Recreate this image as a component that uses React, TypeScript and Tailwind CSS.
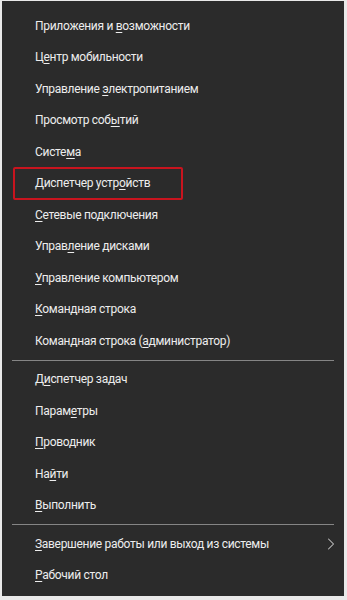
import { ChevronRight } from 'lucide-react';

type Item = { pre: string; key: string; post: string; arrow?: boolean; marked?: boolean };

const groups: Item[][] = [
  [
    { pre: 'Приложения и ', key: 'в', post: 'озможности' },
    { pre: 'Ц', key: 'е', post: 'нтр мобильности' },
    { pre: 'Управление ', key: 'э', post: 'лектропитанием' },
    { pre: 'Просмотр соб', key: 'ы', post: 'тий' },
    { pre: 'Систе', key: 'м', post: 'а' },
    { pre: 'Диспетчер устр', key: 'о', post: 'йств', marked: true },
    { pre: '', key: 'С', post: 'етевые подключения' },
    { pre: 'Управ', key: 'л', post: 'ение дисками' },
    { pre: '', key: 'У', post: 'правление компьютером' },
    { pre: '', key: 'К', post: 'омандная строка' },
    { pre: 'Командная строка (', key: 'а', post: 'дминистратор)' },
  ],
  [
    { pre: 'Д', key: 'и', post: 'спетчер задач' },
    { pre: 'Парам', key: 'е', post: 'тры' },
    { pre: '', key: 'П', post: 'роводник' },
    { pre: 'На', key: 'й', post: 'ти' },
    { pre: '', key: 'В', post: 'ыполнить' },
  ],
  [
    { pre: '', key: 'З', post: 'авершение работы или выход из системы', arrow: true },
    { pre: '', key: 'Р', post: 'абочий стол' },
  ],
];

function Row({ item }: { item: Item }) {
  return (
    <div className="relative flex items-center h-[31.5px] pl-[33px] pr-[3px]">
      <span className="flex-1 text-[12px] tracking-[-0.3px] text-[#ededed] whitespace-nowrap">
        {item.pre}
        <span className="underline underline-offset-2">{item.key}</span>
        {item.post}
      </span>
      {item.arrow && <ChevronRight className="w-5 h-5 text-[#c4c4c4]" strokeWidth={1.25} />}
      {/* red highlight frame from the original annotation */}
      {item.marked && (
        <div className="absolute left-[11px] top-[-1px] w-[170px] h-[33px] border-2 border-[#c8141e] rounded-[2px]" />
      )}
    </div>
  );
}

export default function App() {
  return (
    <div className="w-[347px] h-[600px] bg-[#e9e9e9] pt-[1px] pl-[2px]" style={{ fontFamily: 'Roboto, "Noto Sans", sans-serif' }}>
      <div className="w-[342px] h-[595px] bg-[#2b2b2b] pt-[9px]">
        {groups.map((g, gi) => (
          <div key={gi}>
            {gi > 0 && (
              <div className="h-[7px] flex items-center px-[10px]">
                <div className="h-px w-full bg-[#858585]" />
              </div>
            )}
            {g.map((item, i) => (
              <Row key={i} item={item} />
            ))}
          </div>
        ))}
      </div>
    </div>
  );
}
